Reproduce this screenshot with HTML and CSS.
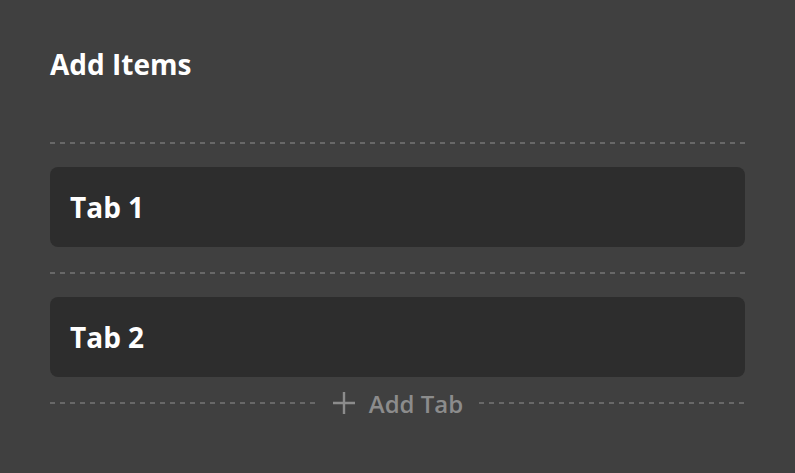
FILE: index.html
```html
<!DOCTYPE html>
<html lang="en">
<head>
    <meta charset="UTF-8">
    <title>Add Items</title>
    <link rel="stylesheet" href="styles.css">
</head>
<body>
    <div class="panel">
        <h1 class="title">Add Items</h1>
        <div class="divider"></div>
        <div class="tab-card">Tab 1</div>
        <div class="divider"></div>
        <div class="tab-card">Tab 2</div>
        <div class="add-row">
            <div class="divider grow"></div>
            <button class="add-btn">
                <svg width="24" height="24" viewBox="0 0 24 24">
                    <path d="M12 1V23M1 12H23" stroke="#8c8c8c" stroke-width="2.4" fill="none"/>
                </svg>
                <span>Add Tab</span>
            </button>
            <div class="divider grow"></div>
        </div>
    </div>
</body>
</html>
```

FILE: styles.css
```css
body {
    margin: 0;
    padding: 0;
    background-color: #404040;
    font-family: "Open Sans", "Noto Sans", sans-serif;
}
.panel {
    padding: 46px 50px 0 50px;
    display: flex;
    flex-direction: column;
}
.title {
    margin: 0;
    color: #fff;
    font-size: 28px;
    font-weight: 700;
    line-height: 36px;
    height: 96px;
}
.divider {
    height: 2px;
    background: repeating-linear-gradient(90deg, #686868 0 5px, transparent 5px 10px);
    margin: 0 0 23px 0;
}
.tab-card {
    background-color: #2d2d2d;
    border-radius: 8px;
    height: 80px;
    display: flex;
    align-items: center;
    padding: 0 20px;
    color: #fff;
    font-size: 28px;
    font-weight: 700;
    margin-bottom: 25px;
}
.tab-card + .add-row {
    margin-top: -25px;
}
.add-row {
    display: flex;
    align-items: center;
    height: 52px;
}
.add-row .divider {
    margin: 0;
}
.grow {
    flex: 1;
}
.add-btn {
    display: flex;
    align-items: center;
    gap: 13px;
    background: none;
    border: none;
    padding: 0 16px;
    color: #8c8c8c;
    font-family: inherit;
    font-size: 24px;
    font-weight: 600;
    cursor: pointer;
}
```
